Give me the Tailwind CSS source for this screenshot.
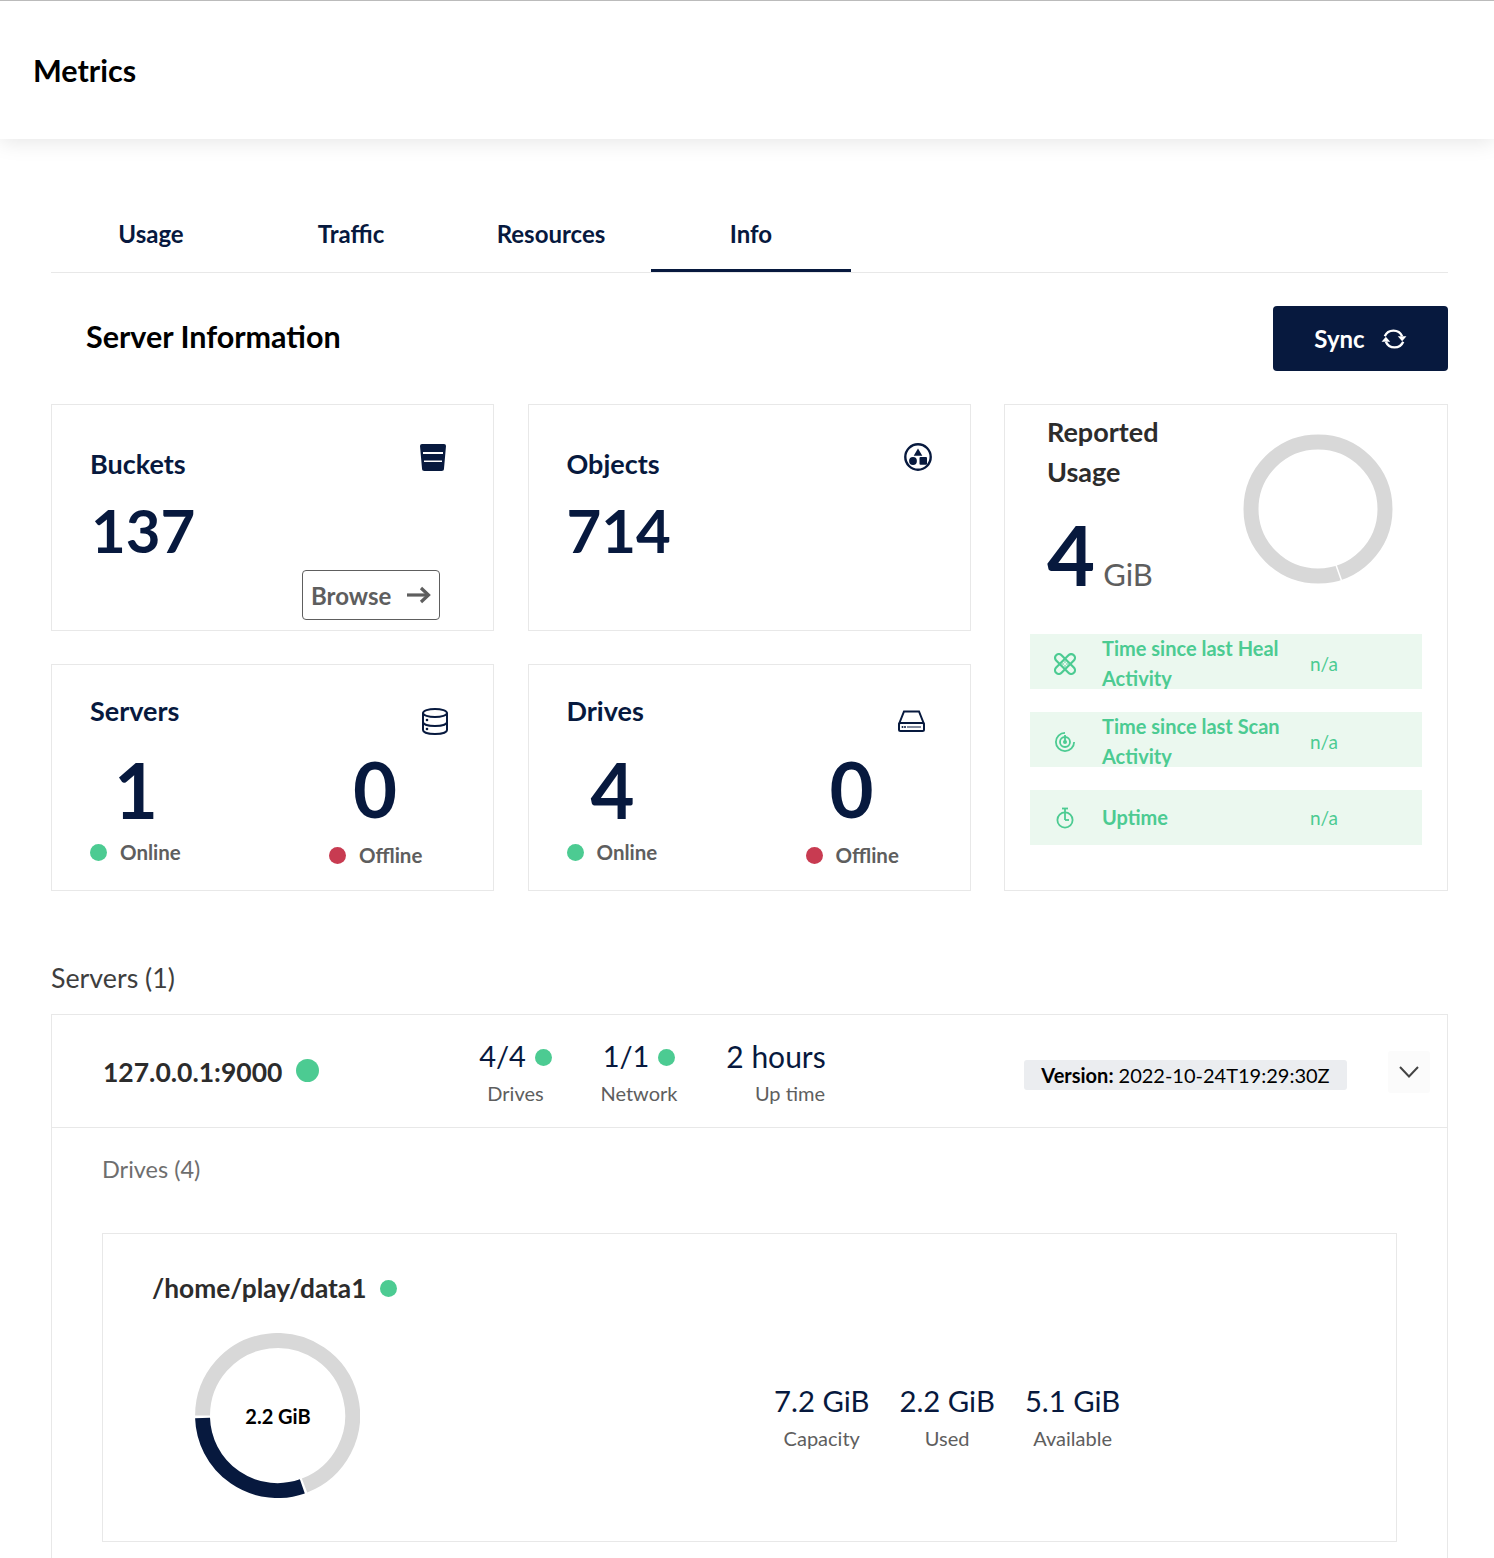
<!DOCTYPE html>
<html lang="en">
<head>
  <meta charset="UTF-8" />
  <meta name="viewport" content="width=device-width, initial-scale=1.0" />
  <title>Metrics</title>
  <script src="https://cdn.jsdelivr.net/npm/@tailwindcss/browser@4"></script>
</head>
<body class="bg-white font-['Lato',sans-serif] text-[#07193e]">
<div class="h-[1558px] overflow-hidden">

  <!-- header -->
  <header class="h-[139px] border-t border-[#bbbbbb] bg-white shadow-[0_3px_20px_rgba(0,0,0,0.1)] flex items-center pl-[33px]">
    <h1 class="text-[30.500px] leading-none font-bold text-black">Metrics</h1>
  </header>

  <main class="px-[51px] pr-[46px]">
    <!-- tabs -->
    <nav class="mt-[50px] h-[84px] flex border-b border-[#e8e8e8] text-[24px] font-bold">
      <div class="w-[200px] flex items-center justify-center pt-[6px]">Usage</div>
      <div class="w-[200px] flex items-center justify-center pt-[6px]">Traffic</div>
      <div class="w-[200px] flex items-center justify-center pt-[6px]">Resources</div>
      <div class="w-[200px] flex items-center justify-center pt-[9px] border-b-[3px] border-[#07193e]">Info</div>
    </nav>

    <!-- title row -->
    <div class="mt-[33px] h-[65px] flex items-center justify-between">
      <h2 class="pl-[35px] pb-[3px] text-[30.500px] font-bold text-black">Server Information</h2>
      <button class="w-[175px] h-[65px] rounded-[4px] bg-[#07193e] text-white flex items-center justify-center gap-[16px] text-[24px] font-bold">
        Sync
        <svg class="w-[26px] h-[26px]" viewBox="0 0 24 24" fill="none" stroke="currentColor" stroke-width="2.200">
          <path d="M3.500 9.500A8.700 8.700 0 0 1 19.500 9.500" />
          <path d="M20.500 14.500A8.700 8.700 0 0 1 4.500 14.500" />
          <path d="M15.500 9.500h8L19.500 14z" fill="currentColor" stroke="none" />
          <path d="M8.500 14.500H.5L4.500 10z" fill="currentColor" stroke="none" />
        </svg>
      </button>
    </div>

    <!-- cards -->
    <div class="mt-[33px] grid grid-cols-[443px_443px_444px] grid-rows-[227px_227px] gap-x-[33.500px] gap-y-[33px]">
      <!-- buckets -->
      <div class="relative border border-[#e8e8e8] pl-[38px] pt-[40px]">
        <div class="text-[27px] leading-[38px] font-bold">Buckets</div>
        <div class="mt-[13px] pl-[1px] text-[60px] leading-[68px] font-bold">137</div>
        <svg class="absolute right-[47px] top-[39px] w-[26px] h-[27px]" viewBox="0 0 26 27">
          <path d="M0 2A2 2 0 0 1 2 0h22a2 2 0 0 1 2 2L24 24.500a2.500 2.500 0 0 1-2.500 2.500h-17A2.500 2.500 0 0 1 2 24.500z" fill="#07193e" />
          <rect x="3" y="8" width="20" height="2" fill="#ffffff" />
          <rect x="4" y="16.500" width="18" height="1.500" fill="#ffffff" />
        </svg>
        <button class="absolute left-[250px] top-[165px] w-[138px] h-[50px] rounded-[4px] border border-[#5e5e5e] text-[#5e5e5e] flex items-center pl-[8px] pt-[2px] gap-[16px] text-[24px] font-bold">
          Browse
          <svg class="w-[24px] h-[18px] -mt-[3px]" viewBox="0 0 24 18" fill="none" stroke="currentColor" stroke-width="3.200">
            <path d="M0 9h21" />
            <path d="M14 2l7.500 7-7.500 7" />
          </svg>
        </button>
      </div>

      <!-- objects -->
      <div class="relative border border-[#e8e8e8] pl-[38px] pt-[40px]">
        <div class="text-[27px] leading-[38px] font-bold">Objects</div>
        <div class="mt-[13px] text-[60px] leading-[68px] font-bold">714</div>
        <svg class="absolute right-[38px] top-[38px] w-[28px] h-[28px]" viewBox="0 0 28 28">
          <circle cx="14" cy="14" r="12.700" fill="none" stroke="#07193e" stroke-width="2.400" />
          <path d="M14 5.500l4.300 7.200H9.700z" fill="#07193e" />
          <circle cx="9" cy="18" r="3.900" fill="#07193e" />
          <rect x="15.500" y="14" width="7.500" height="7.700" rx="1" fill="#07193e" />
        </svg>
      </div>

      <!-- reported usage -->
      <div class="row-span-2 border border-[#e8e8e8] pl-[25px] pr-[25px]">
        <div class="relative h-[229px] pl-[17px] pt-[7px]">
          <div class="text-[27px] leading-[40px] font-bold text-[#2c2c2c]">Reported<br />Usage</div>
          <div class="mt-[21px] flex items-baseline gap-[8px]">
            <span class="text-[83px] leading-[83px] font-bold">4</span>
            <span class="text-[31px] leading-none text-[#5e5e5e]">GiB</span>
          </div>
          <svg class="absolute left-[213px] top-[29px] w-[150px] h-[150px]" viewBox="0 0 150 150" fill="none" stroke="#d8d8d8" stroke-width="15">
            <circle cx="75" cy="75" r="67" />
            <path d="M98.500 146.500 L93 131" stroke="#ffffff" stroke-width="1.500" />
          </svg>
        </div>

        <div class="flex flex-col gap-[23px]">
          <div class="h-[55px] bg-[#ebf8ef] text-[#4ccb92] flex items-center overflow-hidden">
            <div class="w-[70px] mr-[2px] flex justify-center shrink-0">
              <svg class="w-[22px] h-[22px] mt-[4px]" viewBox="0 0 22 22" fill="none" stroke="currentColor" stroke-width="2.200">
                <g transform="rotate(45 11 11)">
                  <rect x="-1.500" y="7.200" width="25" height="7.600" rx="3.800" />
                  <rect x="7.200" y="-1.500" width="7.600" height="25" rx="3.800" />
                </g>
                <circle cx="9" cy="11" r="0.800" fill="currentColor" stroke="none" />
                <circle cx="13" cy="11" r="0.800" fill="currentColor" stroke="none" />
                <circle cx="11" cy="9" r="0.800" fill="currentColor" stroke="none" />
                <circle cx="11" cy="13" r="0.800" fill="currentColor" stroke="none" />
              </svg>
            </div>
            <div class="w-[208px] text-[20px] leading-[30px] font-bold shrink-0 pt-[2px]">Time since last Heal Activity</div>
            <div class="text-[19px] pt-[5px]">n/a</div>
          </div>
          <div class="h-[55px] bg-[#ebf8ef] text-[#4ccb92] flex items-center overflow-hidden">
            <div class="w-[70px] mr-[2px] flex justify-center shrink-0">
              <svg class="w-[22px] h-[22px] mt-[4px]" viewBox="0 0 22 22" fill="none" stroke="currentColor" stroke-width="1.800">
                <path d="M11 1.900A9.100 9.100 0 1 0 20.100 11" />
                <circle cx="11" cy="11" r="5" />
                <circle cx="11" cy="11" r="2" fill="currentColor" stroke="none" />
                <path d="M11 11V4" />
              </svg>
            </div>
            <div class="w-[208px] text-[20px] leading-[30px] font-bold shrink-0 pt-[2px]">Time since last Scan Activity</div>
            <div class="text-[19px] pt-[5px]">n/a</div>
          </div>
          <div class="h-[55px] bg-[#ebf8ef] text-[#4ccb92] flex items-center overflow-hidden">
            <div class="w-[70px] mr-[2px] flex justify-center shrink-0">
              <svg class="w-[18px] h-[22px]" viewBox="0 0 18 22" fill="none" stroke="currentColor" stroke-width="1.800">
                <circle cx="9" cy="13" r="7.600" />
                <path d="M9 13V2" />
                <path d="M6 1.500h6" />
                <path d="M9 13h4" />
              </svg>
            </div>
            <div class="w-[208px] text-[20px] leading-[30px] font-bold shrink-0 pb-[2px]">Uptime</div>
            <div class="text-[19px] pt-[1px]">n/a</div>
          </div>
        </div>
      </div>

      <!-- servers -->
      <div class="relative border border-[#e8e8e8] pl-[38px] pt-[27px]">
        <div class="text-[27px] leading-[38px] font-bold">Servers</div>
        <svg class="absolute right-[45px] top-[43px] w-[26px] h-[27px]" viewBox="0 0 26 27" fill="none" stroke="#07193e" stroke-width="2">
          <ellipse cx="13" cy="5" rx="12" ry="4" />
          <path d="M1 5v17c0 2.400 5.400 4 12 4s12-1.600 12-4V5" />
          <path d="M1 14c0 2.400 5.400 4 12 4s12-1.600 12-4" />
          <circle cx="5" cy="12" r="1.300" fill="#07193e" stroke="none" />
          <circle cx="5" cy="21" r="1.300" fill="#07193e" stroke="none" />
        </svg>
        <div class="flex">
          <div class="w-[239px]">
            <div class="pl-[24px] mt-[24px] text-[76px] leading-[72px] font-bold">1</div>
            <div class="mt-[11px] flex items-center gap-[13px] text-[#5e5e5e] text-[20.500px] font-bold">
              <span class="w-[17px] h-[17px] rounded-full bg-[#4ccb92]"></span>Online
            </div>
          </div>
          <div>
            <div class="pl-[24px] mt-[23px] text-[76px] leading-[72px] font-bold">0</div>
            <div class="mt-[15px] flex items-center gap-[13px] text-[#5e5e5e] text-[20.500px] font-bold">
              <span class="w-[17px] h-[17px] rounded-full bg-[#c83b51]"></span>Offline
            </div>
          </div>
        </div>
      </div>

      <!-- drives -->
      <div class="relative border border-[#e8e8e8] pl-[38px] pt-[27px]">
        <div class="text-[27px] leading-[38px] font-bold">Drives</div>
        <svg class="absolute right-[45px] top-[45px] w-[27px] h-[22px]" viewBox="0 0 27 22" fill="none" stroke="#07193e" stroke-width="2">
          <path d="M1 14L6 1.500h15L26 14" />
          <rect x="1" y="13" width="25" height="8" rx="1.500" fill="#ffffff" />
          <path d="M9 17h14" stroke-width="1" />
          <circle cx="4.500" cy="17" r="1" fill="#07193e" stroke="none" />
          <circle cx="7" cy="17" r="1" fill="#07193e" stroke="none" />
        </svg>
        <div class="flex">
          <div class="w-[239px]">
            <div class="pl-[24px] mt-[24px] text-[76px] leading-[72px] font-bold">4</div>
            <div class="mt-[11px] flex items-center gap-[13px] text-[#5e5e5e] text-[20.500px] font-bold">
              <span class="w-[17px] h-[17px] rounded-full bg-[#4ccb92]"></span>Online
            </div>
          </div>
          <div>
            <div class="pl-[24px] mt-[23px] text-[76px] leading-[72px] font-bold">0</div>
            <div class="mt-[15px] flex items-center gap-[13px] text-[#5e5e5e] text-[20.500px] font-bold">
              <span class="w-[17px] h-[17px] rounded-full bg-[#c83b51]"></span>Offline
            </div>
          </div>
        </div>
      </div>
    </div>

    <!-- server list -->
    <h3 class="mt-[69px] text-[26.800px] leading-[36px] text-[#3e3e3e]">Servers (1)</h3>
    <section class="mt-[18px] border border-[#e8e8e8] border-b-0 h-[600px]">
      <div class="relative h-[113px] border-b border-[#e8e8e8] flex items-center">
        <div class="w-[401px] pl-[51px] flex items-center gap-[14px]">
          <span class="text-[26.500px] font-bold text-[#2c2c2c] mt-[4px]">127.0.0.1:9000</span>
          <span class="w-[23px] h-[23px] mb-[2px] rounded-full bg-[#4ccb92]"></span>
        </div>
        <div class="w-[125px] text-center">
          <div class="flex items-center justify-center gap-[9px] text-[29px] leading-[40px]">4/4<span class="w-[17px] h-[17px] mt-[3px] rounded-full bg-[#4ccb92]"></span></div>
          <div class="mt-[3px] text-[20px] leading-[28px] text-[#5e5e5e]">Drives</div>
        </div>
        <div class="w-[122px] text-center">
          <div class="flex items-center justify-center gap-[9px] text-[29px] leading-[40px]">1/1<span class="w-[17px] h-[17px] mt-[3px] rounded-full bg-[#4ccb92]"></span></div>
          <div class="mt-[3px] text-[20px] leading-[28px] text-[#5e5e5e]">Network</div>
        </div>
        <div class="w-[150px] ml-[13px] text-center -translate-x-[12px]">
          <div class="text-[30px] leading-[40px]">2 hours</div>
          <div class="mt-[3px] pl-[28px] text-[20px] leading-[28px] text-[#5e5e5e]">Up time</div>
        </div>
        <div class="absolute left-[972px] top-[45px] w-[323px] h-[30px] rounded-[3px] bg-[#ebedf0] flex items-center justify-center text-[20px] text-black">
          <span class="font-bold mr-[5px]">Version:</span> 2022-10-24T19:29:30Z
        </div>
        <div class="absolute left-[1336px] top-[36px] w-[42px] h-[42px] rounded-[3px] bg-[#fbfbfb] flex items-center justify-center">
          <svg class="w-[20px] h-[12px]" viewBox="0 0 20 12" fill="none" stroke="#444444" stroke-width="2">
            <path d="M1 1l9 9.500 9-9.500" />
          </svg>
        </div>
      </div>

      <div class="pl-[50px] pr-[50px]">
        <div class="mt-[26px] text-[23.500px] leading-[30px] text-[#6e6e6e]">Drives (4)</div>
        <div class="mt-[49px] h-[309px] border border-[#e8e8e8] relative">
          <div class="pl-[49px] pt-[35px] flex items-center gap-[14px]">
            <span class="text-[26.300px] leading-[38px] font-bold text-[#2c2c2c]">/home/play/data1</span>
            <span class="w-[17px] h-[17px] rounded-full bg-[#4ccb92]"></span>
          </div>
          <div class="flex mt-[26px]">
            <div class="relative ml-[92px] w-[165px] h-[165px] shrink-0">
              <svg class="w-[165px] h-[165px]" viewBox="0 0 166 166" fill="none" stroke-width="15">
                <path d="M7.600 83A75.500 75.500 0 1 1 110.200 153.500" stroke="#d8d8d8" stroke-width="15" />
                <path d="M7.600 85.500A75.500 75.500 0 0 0 108 154.300" stroke="#07193e" stroke-width="15" />
              </svg>
              <div class="absolute inset-0 flex items-center justify-center pl-[1px] text-[20px] font-bold text-black">2.2 GiB</div>
            </div>
            <div class="ml-[414px] mt-[48px] flex gap-[30px]">
              <div class="text-center">
                <div class="text-[29.300px] leading-[40px]">7.2 GiB</div>
                <div class="mt-[3px] text-[20px] leading-[28px] text-[#5e5e5e]">Capacity</div>
              </div>
              <div class="text-center">
                <div class="text-[29.300px] leading-[40px]">2.2 GiB</div>
                <div class="mt-[3px] text-[20px] leading-[28px] text-[#5e5e5e]">Used</div>
              </div>
              <div class="text-center">
                <div class="text-[29.300px] leading-[40px]">5.1 GiB</div>
                <div class="mt-[3px] text-[20px] leading-[28px] text-[#5e5e5e]">Available</div>
              </div>
            </div>
          </div>
        </div>
      </div>
    </section>
  </main>
</div>
</body>
</html>
